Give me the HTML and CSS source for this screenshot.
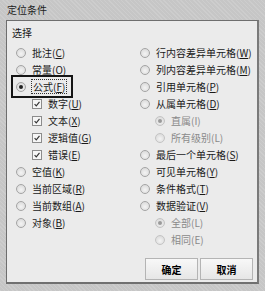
FILE: index.html
```html
<!DOCTYPE html>
<html lang="zh">
<head>
<meta charset="utf-8">
<link rel="stylesheet" href="styles.css">
</head>
<body>
<div class="dialog">
  <div class="title">定位条件</div>
  <div class="panel">
    <div class="label">选择</div>
    <div class="cols">
      <div class="col left">
        <div class="row"><span class="radio"></span><span>批注(<u>C</u>)</span></div>
        <div class="row"><span class="radio"></span><span>常量(<u>O</u>)</span></div>
        <div class="row hl"><span class="radio on"></span><span class="focus">公式(<u>F</u>)</span></div>
        <div class="row sub"><span class="check"><svg viewBox="0 0 9 9"><path d="M1.8 4.6 L3.7 6.6 L7.3 2" fill="none" stroke="#333" stroke-width="1.3"/></svg></span><span>数字(<u>U</u>)</span></div>
        <div class="row sub"><span class="check"><svg viewBox="0 0 9 9"><path d="M1.8 4.6 L3.7 6.6 L7.3 2" fill="none" stroke="#333" stroke-width="1.3"/></svg></span><span>文本(<u>X</u>)</span></div>
        <div class="row sub"><span class="check"><svg viewBox="0 0 9 9"><path d="M1.8 4.6 L3.7 6.6 L7.3 2" fill="none" stroke="#333" stroke-width="1.3"/></svg></span><span>逻辑值(<u>G</u>)</span></div>
        <div class="row sub"><span class="check"><svg viewBox="0 0 9 9"><path d="M1.8 4.6 L3.7 6.6 L7.3 2" fill="none" stroke="#333" stroke-width="1.3"/></svg></span><span>错误(<u>E</u>)</span></div>
        <div class="row"><span class="radio"></span><span>空值(<u>K</u>)</span></div>
        <div class="row"><span class="radio"></span><span>当前区域(<u>R</u>)</span></div>
        <div class="row"><span class="radio"></span><span>当前数组(<u>A</u>)</span></div>
        <div class="row"><span class="radio"></span><span>对象(<u>B</u>)</span></div>
      </div>
      <div class="col right">
        <div class="row"><span class="radio"></span><span>行内容差异单元格(<u>W</u>)</span></div>
        <div class="row"><span class="radio"></span><span>列内容差异单元格(<u>M</u>)</span></div>
        <div class="row"><span class="radio"></span><span>引用单元格(<u>P</u>)</span></div>
        <div class="row"><span class="radio"></span><span>从属单元格(<u>D</u>)</span></div>
        <div class="row sub dis"><span class="radio on"></span><span>直属(I)</span></div>
        <div class="row sub dis"><span class="radio"></span><span>所有级别(L)</span></div>
        <div class="row"><span class="radio"></span><span>最后一个单元格(<u>S</u>)</span></div>
        <div class="row"><span class="radio"></span><span>可见单元格(<u>Y</u>)</span></div>
        <div class="row"><span class="radio"></span><span>条件格式(<u>T</u>)</span></div>
        <div class="row"><span class="radio"></span><span>数据验证(<u>V</u>)</span></div>
        <div class="row sub dis"><span class="radio on"></span><span>全部(L)</span></div>
        <div class="row sub dis"><span class="radio"></span><span>相同(E)</span></div>
      </div>
    </div>
    <div class="buttons">
      <div class="btn">确定</div>
      <div class="btn">取消</div>
    </div>
  </div>
</div>
</body>
</html>
```
FILE: styles.css
```css
html, body {
  margin: 0;
  padding: 0;
  width: 265px;
  height: 291px;
  overflow: hidden;
  background: #c4c4c4;
}
body {
  font-family: "Noto Sans CJK SC", "Noto Sans", sans-serif;
  font-size: 10px;
  color: #1a1a1a;
}
.dialog {
  width: 265px;
  height: 291px;
  box-sizing: border-box;
  padding: 0 6px 0 6px;
  background:
    repeating-linear-gradient(45deg, rgba(255,255,255,0.12) 0 1px, rgba(0,0,0,0) 1px 3px),
    #c6c6c6;
}
.title {
  height: 20px;
  line-height: 19px;
  font-size: 10px;
  color: #222;
  padding-left: 1px;
}
.panel {
  width: 253px;
  height: 264px;
  box-sizing: border-box;
  border: 1px solid #6e6e6e;
  border-right: 2px solid #7a7a7a;
  border-bottom: 2px solid #707070;
  background: #ebebeb;
  padding: 3px 0 0 0;
  display: flex;
  flex-direction: column;
}
.label {
  height: 17px;
  line-height: 17px;
  padding-left: 5px;
  margin-bottom: 3px;
}
.cols {
  display: grid;
  grid-template-columns: 124px 1fr;
  padding-left: 9px;
}
.col {
  display: flex;
  flex-direction: column;
}
.row {
  display: flex;
  align-items: center;
  height: 17px;
  line-height: 17px;
  gap: 6px;
  white-space: nowrap;
}
.row.sub {
  padding-left: 16px;
}
.right .row.sub {
  padding-left: 15px;
}
.row.dis {
  color: #8a8a8a;
}
.radio {
  width: 8px;
  height: 8px;
  border-radius: 50%;
  border: 1px solid #a4a4a4;
  background: radial-gradient(circle at 50% 60%, #f4f4f4, #d4d4d4);
  flex: none;
  position: relative;
}
.radio.on::after {
  content: "";
  position: absolute;
  left: 2px;
  top: 2px;
  width: 4px;
  height: 4px;
  border-radius: 50%;
  background: #222;
}
.dis .radio {
  border-color: #c4c4c4;
}
.dis .radio.on::after {
  background: #9a9a9a;
}
.check {
  width: 8px;
  height: 8px;
  border: 1px solid #8c8c8c;
  background: #f6f6f6;
  flex: none;
  display: flex;
}
.check svg {
  width: 8px;
  height: 8px;
}
.hl {
  border: 2px solid #151515;
  margin: -3px 0 -3px -5px;
  padding: 0 7px 0 3px;
  width: 48px;
  height: 19px;
}
.focus {
  outline: 1px dotted #333;
  outline-offset: 0;
  line-height: 13px;
  padding: 0 1px;
}
.buttons {
  margin-top: auto;
  margin-bottom: 2px;
  display: flex;
  justify-content: flex-end;
  gap: 2px;
  padding-right: 4px;
}
.btn {
  width: 53px;
  height: 22px;
  box-sizing: border-box;
  border: 1px solid #b4b4b4;
  background: linear-gradient(#f8f8f8, #e6e6e6);
  display: flex;
  align-items: center;
  justify-content: center;
  color: #000;
  font-weight: bold;
}
```
